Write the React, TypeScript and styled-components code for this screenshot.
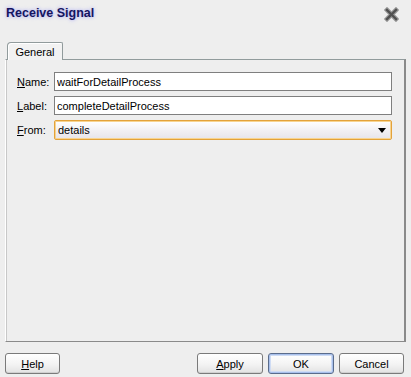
import React from "react";
import styled, { createGlobalStyle } from "styled-components";

const GlobalStyle = createGlobalStyle`
    html, body {
        margin: 0;
        padding: 0;
        background: #eeeeee;
    }
    body {
        font-family: "Liberation Sans", Arial, sans-serif;
        font-size: 11px;
        color: #000;
    }
`;

const fields = [
    { key: "N", rest: "ame:", value: "waitForDetailProcess" },
    { key: "L", rest: "abel:", value: "completeDetailProcess" },
];

export default function App() {
    return (
        <Dialog>
            <GlobalStyle />
            <TitleBar>
                <Title>Receive Signal</Title>
                <CloseIcon width="15" height="15" viewBox="0 0 15 15">
                    <path d="M3 3 L12 12 M12 3 L3 12" stroke="#9a9a9a" strokeWidth="4.6" strokeLinecap="square" />
                    <path d="M3 3 L12 12 M12 3 L3 12" stroke="#505050" strokeWidth="2.4" strokeLinecap="square" />
                </CloseIcon>
            </TitleBar>

            <Tabs>
                <Tab>General</Tab>
            </Tabs>

            <Panel>
                <Form>
                    {fields.map((f) => (
                        <React.Fragment key={f.key}>
                            <FieldLabel>
                                <u>{f.key}</u>
                                {f.rest}
                            </FieldLabel>
                            <TextInput defaultValue={f.value} />
                        </React.Fragment>
                    ))}
                    <FieldLabel>
                        <u>F</u>rom:
                    </FieldLabel>
                    <Select>
                        <span>details</span>
                        <Arrow />
                    </Select>
                </Form>
            </Panel>

            <ButtonBar>
                <Button $width={55}>
                    <u>H</u>elp
                </Button>
                <Spacer />
                <Button $width={66}>
                    <u>A</u>pply
                </Button>
                <Button $width={66} $primary>
                    OK
                </Button>
                <Button $width={65}>Cancel</Button>
            </ButtonBar>
        </Dialog>
    );
}

const Dialog = styled.div`
    width: 411px;
    height: 377px;
    display: flex;
    flex-direction: column;
    background: #eeeeee;
    overflow: hidden;
`;

const TitleBar = styled.div`
    height: 42px;
    display: flex;
    align-items: flex-start;
    justify-content: space-between;
    padding: 5px 12px 0 6px;
    box-sizing: border-box;
`;

const Title = styled.div`
    font-family: "Liberation Sans", Arial, sans-serif;
    font-weight: bold;
    font-size: 12.5px;
    color: #151560;
    text-shadow: 0 0 3px #b4b4f0, 0 0 5px #c8c8f4;
    line-height: 16px;
`;

const CloseIcon = styled.svg`
    margin-top: 2px;
`;

const Tabs = styled.div`
    display: flex;
    padding-left: 7px;
    height: 17px;
    position: relative;
    z-index: 1;
`;

const Tab = styled.div`
    width: 56px;
    height: 18px;
    box-sizing: border-box;
    border: 1px solid #919b9c;
    border-bottom: none;
    border-radius: 4px 2px 0 0;
    background: #f2f2f2;
    box-shadow: inset 1px 1px 0 #ffffff;
    display: flex;
    align-items: center;
    justify-content: center;
    padding-top: 1px;
`;

const Panel = styled.div`
    margin-left: 5px;
    width: 401px;
    height: 283px;
    box-sizing: border-box;
    border-top: 1px solid #919b9c;
    border-right: 2px solid #8a8a8a;
    border-bottom: 1px solid #8a8a8a;
    border-left: 1px solid #ffffff;
    box-shadow: inset 1px 0 0 #c8c8c8;
    background: #eeeeee;
    padding: 12px 12px 0 11px;
`;

const Form = styled.div`
    display: grid;
    grid-template-columns: 37px 338px;
    row-gap: 5px;
    align-items: center;
`;

const FieldLabel = styled.label`
    font-size: 11px;
    u {
        text-decoration-thickness: 1px;
        text-underline-offset: 1px;
    }
`;

const TextInput = styled.input`
    height: 19px;
    box-sizing: border-box;
    border: 1px solid #7f7f7f;
    background: #ffffff;
    font-family: "Liberation Sans", Arial, sans-serif;
    font-size: 11px;
    padding: 0 2px;
    outline: none;
    color: #000;
`;

const Select = styled.div`
    height: 20px;
    box-sizing: border-box;
    border: 1px solid #e3a23a;
    border-radius: 2px;
    box-shadow: inset 0 0 0 1px #f8d490;
    background: linear-gradient(#ffffff, #f0eef2 60%, #e6e4ea);
    display: flex;
    align-items: center;
    justify-content: space-between;
    padding: 0 5px 0 3px;
    font-size: 11px;
`;

const Arrow = styled.span`
    width: 0;
    height: 0;
    border-left: 4px solid transparent;
    border-right: 4px solid transparent;
    border-top: 5px solid #000;
    margin-top: 1px;
`;

const ButtonBar = styled.div`
    display: flex;
    gap: 5px;
    padding: 11px 7px 0 5px;
`;

const Spacer = styled.div`
    flex: 1;
`;

const Button = styled.button<{ $width: number; $primary?: boolean }>`
    width: ${(p) => p.$width}px;
    height: 21px;
    box-sizing: border-box;
    border: 1px solid ${(p) => (p.$primary ? "#5a6c8c" : "#7a7a7a")};
    border-radius: 3px;
    background: linear-gradient(#ffffff, #f3f3f3 55%, #e2e2e2);
    box-shadow: ${(p) => (p.$primary ? "inset 0 0 0 1px #a8c0ec, inset 0 0 0 2px #cfdcf4" : "inset 0 -1px 0 #d0d0d0")};
    font-family: "Liberation Sans", Arial, sans-serif;
    font-size: 11px;
    color: #000;
    padding: 0;
    u {
        text-decoration-thickness: 1px;
    }
`;
